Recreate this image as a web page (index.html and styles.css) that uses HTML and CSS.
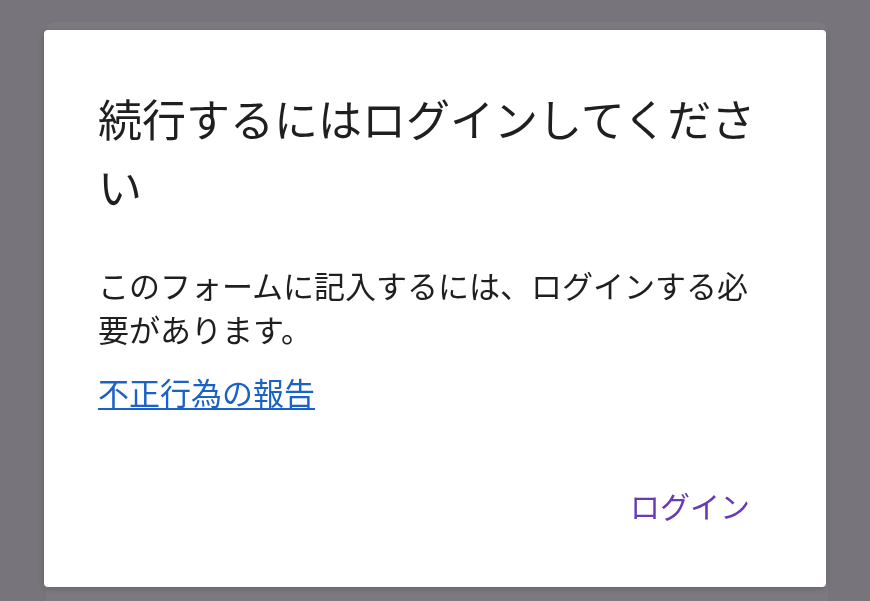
FILE: index.html
```html
<!DOCTYPE html>
<html lang="ja">
<head>
<meta charset="utf-8">
<title>ログイン</title>
<link rel="stylesheet" href="styles.css">
</head>
<body>
<div class="page">
  <div class="page-card"></div>
</div>
<div class="overlay">
  <div class="dialog" role="dialog">
    <h1 class="dialog-title">続行するにはログインしてください</h1>
    <p class="dialog-text">このフォームに記入するには、ログインする必要があります。</p>
    <a class="dialog-link" href="#">不正行為の報告</a>
    <div class="dialog-actions">
      <button class="dialog-button" type="button">ログイン</button>
    </div>
  </div>
</div>
</body>
</html>
```

FILE: styles.css
```css
html, body {
  margin: 0;
  padding: 0;
  height: 100%;
}
body {
  background: #77757b;
  font-family: "Noto Sans CJK JP", "Noto Sans", sans-serif;
  overflow: hidden;
}
.page {
  padding: 22px 42px 0 46px;
  height: 100%;
  box-sizing: border-box;
}
.page-card {
  height: 100%;
  background: #7c7a80;
  border-radius: 10px 10px 0 0;
}
.overlay {
  position: fixed;
  inset: 0;
  padding: 30px 44px 14px 44px;
  box-sizing: border-box;
}
.dialog {
  background: #ffffff;
  border-radius: 4px;
  height: 557px;
  box-sizing: border-box;
  padding: 54px 54px 0 54px;
  display: flex;
  flex-direction: column;
  align-items: flex-start;
  box-shadow: 0 2px 6px rgba(0,0,0,0.18);
}
.dialog-title {
  margin: 0;
  font-size: 44px;
  line-height: 68px;
  font-weight: 400;
  color: #1f1f1f;
}
.dialog-text {
  margin: 43px 0 0 0;
  font-size: 31px;
  line-height: 44px;
  color: #1f1f1f;
}
.dialog-link {
  margin-top: 19px;
  font-size: 31px;
  line-height: 44px;
  color: #1a62c6;
  text-decoration: underline;
  text-underline-offset: 3px;
  text-decoration-thickness: 2px;
}
.dialog-actions {
  align-self: stretch;
  display: flex;
  justify-content: flex-end;
  margin-top: 69px;
}
.dialog-button {
  border: none;
  background: none;
  padding: 0;
  margin-right: 22px;
  font-family: inherit;
  font-size: 30px;
  line-height: 44px;
  color: #673ab7;
}
```
